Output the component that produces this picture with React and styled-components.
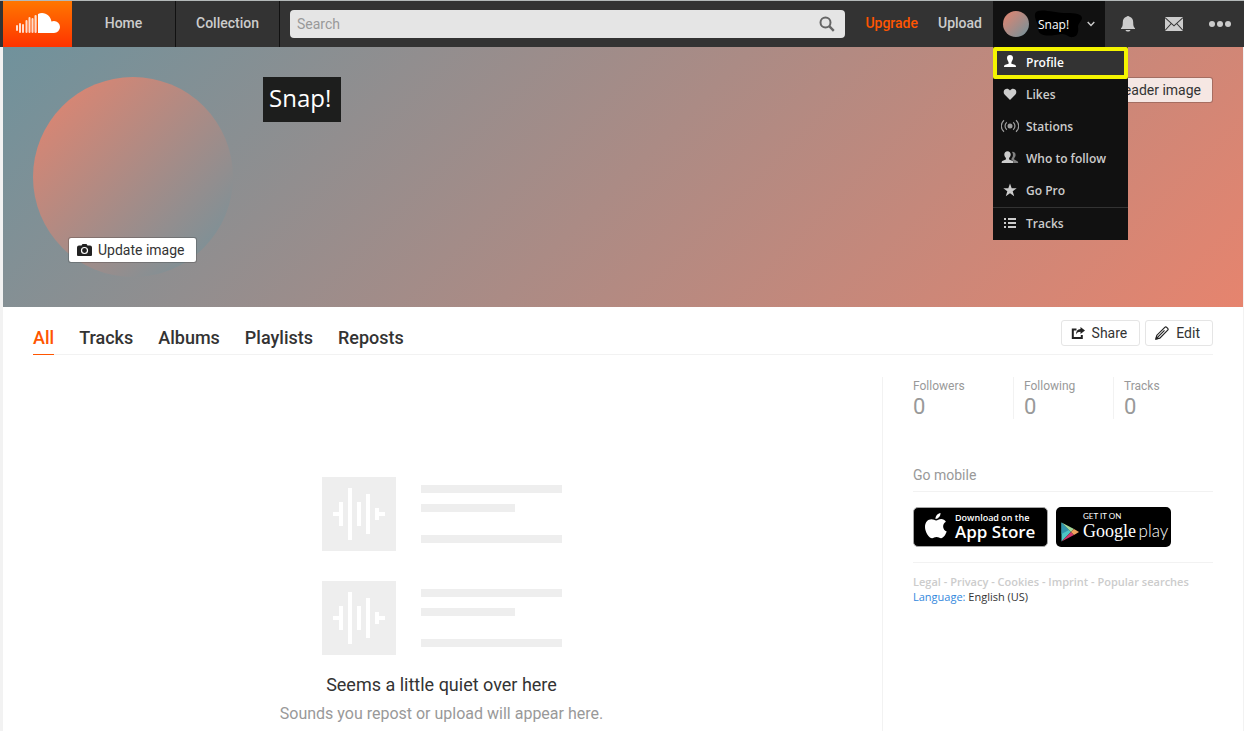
import React, { useState } from 'react'
import styled, { createGlobalStyle } from 'styled-components'

const sans = `Roboto, "Liberation Sans", sans-serif`
const humanist = `"Open Sans", "Noto Sans", sans-serif`

const menuItems = [
    { label: 'Profile', icon: 'person', active: true },
    { label: 'Likes', icon: 'heart' },
    { label: 'Stations', icon: 'station' },
    { label: 'Who to follow', icon: 'people' },
    { label: 'Go Pro', icon: 'star' },
    { label: 'Tracks', icon: 'list', divided: true }
]

const tabs = ['All', 'Tracks', 'Albums', 'Playlists', 'Reposts']
const stats = ['Followers', 'Following', 'Tracks']
const legal = ['Legal', 'Privacy', 'Cookies', 'Imprint', 'Popular searches']

const icons = {
    person: <path d="M9 2c1.900 0 3 1.200 3 3.100 0 1.700-1.100 3-1.600 4.400v1.300l3.300 1c.8.300 1.300.9 1.300 2.200H3c0-1.300.5-1.900 1.300-2.200l3.300-1V9.500C7.100 8.100 6 6.800 6 5.100 6 3.200 7.100 2 9 2z" />,
    heart: <path d="M9 15L3.800 9.800C2.200 8.100 2.400 5.700 3.800 4.500 5.400 3.100 7.700 3.500 9 5.400c1.300-1.900 3.600-2.300 5.200-.9 1.400 1.200 1.600 3.600 0 5.300z" />,
    station: <>
        <circle cx="9" cy="9" r="2.500" opacity=".75" />
        <path d="M5.800 5.200a5 5 0 0 0 0 7.600M12.200 5.200a5 5 0 0 1 0 7.600M3 3.200C-.6 6.400-.6 11.600 3 14.800M15 3.200c3.600 3.200 3.600 8.400 0 11.600" fill="none" stroke="currentColor" strokeWidth="1.200" opacity=".75" />
    </>,
    people: <>
        <path d="M11.500 2.800c2 0 3.100 1.300 3.100 3.100 0 1.300-.7 2.300-1.400 3.300v1.400l2.800 1.300c.8.400 1.200 1 1.200 2.100h-4.400c0-1.700-.8-2.500-2.300-3.100V9.400c.8-1 1.500-2.100 1.500-3.500 0-1.200-.4-2.200-1-2.900z" opacity=".6" />
        <path d="M6.500 2.200c2 0 3.200 1.400 3.200 3.300 0 1.500-.8 2.600-1.600 3.600v1.500l3.100 1.200c.8.400 1.300 1.100 1.300 2.200H.6c0-1.100.4-1.800 1.200-2.200l3.100-1.200V9.100c-.8-1-1.600-2.100-1.600-3.600 0-1.900 1.200-3.300 3.200-3.300z" />
    </>,
    star: <path d="M9 2.500l1.700 4.700 5 .1-4 3 1.500 4.900L9 12.300l-4.200 2.900 1.500-4.900-4-3 5-.1z" />,
    list: <path d="M3 4h2v2H3zm4 0h8v2H7zM3 8h2v2H3zm4 0h8v2H7zM3 12h2v2H3zm4 0h8v2H7z" />
}

const CloudLogo = () => (
    <svg width="44" height="20" viewBox="0 0 44 20" fill="#fff" aria-hidden="true">
        <path d="M22 .9C23.300.3 24.700 0 26 0c4.900 0 8.900 3.700 9.400 8.500.8-.3 1.600-.5 2.500-.5A6 6 0 0 1 44 14a6 6 0 0 1-6 6H22z" />
        <g opacity=".8">
            <rect x="0" y="12" width="2" height="6" rx="1" />
            <rect x="3" y="10" width="2" height="10" rx="1" />
            <rect x="6" y="11" width="2" height="9" rx="1" />
            <rect x="9.500" y="7" width="2" height="13" rx="1" />
            <rect x="12.500" y="4" width="2" height="16" rx="1" />
            <rect x="15.500" y="5" width="2" height="15" rx="1" />
            <rect x="18.500" y="2" width="2.200" height="18" rx="1" />
        </g>
    </svg>
)

const CameraIcon = () => (
    <svg width="15" height="12" viewBox="0 0 15 12" aria-hidden="true">
        <path d="M4.500 1.500L5.500 0h4l1 1.500H13a2 2 0 0 1 2 2V11a1 1 0 0 1-1 1H1a1 1 0 0 1-1-1V3.500a2 2 0 0 1 2-2z" fill="#222" />
        <circle cx="7.500" cy="6.500" r="3" fill="none" stroke="#fff" strokeWidth="1.200" />
    </svg>
)

const WaveArt = () => (
    <svg width="74" height="74" viewBox="0 0 74 74" aria-hidden="true">
        <path fill="#eee" d="M0 0h74v74H0z" />
        <path fill="#fff" d="M11 35h6V25h4v24h-4V39h-6zM26 11h4v52h-4zM35 25h4v24h-4zM44 17h4v40h-4zM53 31h4v4h6v4h-6v4h-4z" />
    </svg>
)

const App = () => {

    const [open, setOpen] = useState(true)
    const [tab, setTab] = useState('All')
    const [query, setQuery] = useState('')

    return (
        <>
            <GlobalStyle />
            <TopBar>
                <Logo href="#home" aria-label="SoundCloud"><CloudLogo /></Logo>
                <MainNav>
                    <a href="#home">Home</a>
                    <a href="#collection">Collection</a>
                </MainNav>
                <SearchBox>
                    <input type="search" aria-label="Search" placeholder="Search" value={query} onChange={e => setQuery(e.target.value)} />
                    <button type="button" aria-label="Submit search">
                        <svg width="16" height="16" viewBox="0 0 16 16" fill="none" stroke="#666" strokeWidth="2" aria-hidden="true">
                            <circle cx="6.500" cy="6.500" r="5" />
                            <path d="M10.200 10.200l4.600 4.600" strokeWidth="2.400" />
                        </svg>
                    </button>
                </SearchBox>
                <TextLinks>
                    <TextLink href="#upgrade" $hot>Upgrade</TextLink>
                    <TextLink href="#upload">Upload</TextLink>
                </TextLinks>
                <UserArea>
                    <UserButton type="button" aria-expanded={open} onClick={() => setOpen(!open)}>
                        <Avatar $size={26} />
                        <UserName>
                            <svg width="50" height="28" viewBox="0 0 50 28" aria-hidden="true">
                                <path d="M5 1C11-1 23 3 34 3c8 0 15 1 15 5 0 3-4 5-4 9 1 5-1 10-5 10-4 1-6-3-11-3-8 1-15 3-21 0-4-2-2-7-4-11C2 8 0 3 5 1z" fill="#000" />
                            </svg>
                            <span>Snap!</span>
                        </UserName>
                        <svg width="8" height="6" viewBox="0 0 8 6" fill="none" stroke="#ccc" strokeWidth="1.400" aria-hidden="true"><path d="M.7 1L4 4.500 7.300 1" /></svg>
                    </UserButton>
                    {open && <Menu>
                        {menuItems.map(item => (
                            <MenuItem key={item.label} $divided={item.divided}>
                                <MenuLink href="#menu" $active={item.active}>
                                    <svg width="18" height="18" viewBox="0 0 18 18" fill="currentColor" aria-hidden="true">{icons[item.icon]}</svg>
                                    {item.label}
                                </MenuLink>
                            </MenuItem>
                        ))}
                    </Menu>}
                </UserArea>
                <IconButton type="button" aria-label="Notifications">
                    <svg width="16" height="16" viewBox="0 0 16 16" fill="#ccc" aria-hidden="true">
                        <path d="M8 0c.8 0 1.300.3 1.500.8C12 1.500 13.200 3.600 13.200 6.300c0 3.200.3 4.800 1.800 5.900V13H1v-.8c1.500-1.100 1.800-2.700 1.800-5.900C2.800 3.600 4 1.500 6.500.8 6.700.3 7.200 0 8 0zM5.500 14h5c-.4 1.100-1.300 1.600-2.500 1.600S5.900 15.100 5.500 14z" />
                    </svg>
                </IconButton>
                <IconButton type="button" aria-label="Messages">
                    <svg width="18" height="14" viewBox="0 0 18 14" aria-hidden="true">
                        <path d="M0 0h18v14H0z" fill="#ccc" />
                        <path d="M0 .6l9 8.200 9-8.200M0 13.500l6.300-7M18 13.500l-6.300-7" fill="none" stroke="#333" strokeWidth="1.100" />
                    </svg>
                </IconButton>
                <IconButton type="button" aria-label="More">
                    <svg width="22" height="6" viewBox="0 0 22 6" fill="#ccc" aria-hidden="true"><circle cx="3" cy="3" r="3" /><circle cx="11" cy="3" r="3" /><circle cx="19" cy="3" r="3" /></svg>
                </IconButton>
            </TopBar>
            <Page>
                <Hero>
                    <AvatarHolder>
                        <Avatar $size={200} />
                        <UpdateImage type="button"><CameraIcon />Update image</UpdateImage>
                    </AvatarHolder>
                    <ProfileName>Snap!</ProfileName>
                    <HeaderImage type="button"><CameraIcon />Update header image</HeaderImage>
                </Hero>
                <TabBar>
                    <Tabs>
                        {tabs.map(name => (
                            <Tab key={name} type="button" $active={tab === name} onClick={() => setTab(name)}>{name}</Tab>
                        ))}
                    </Tabs>
                    <Actions>
                        <ActionButton type="button">
                            <svg width="14" height="13" viewBox="0 0 14 13" aria-hidden="true">
                                <path d="M5.500 2.500H1.800V11h9V8" fill="none" stroke="#222" strokeWidth="2" />
                                <path d="M9.500 0L14 3.600 9.500 7V4.800C7.400 4.800 6 5.500 5 7.500c0-3.500 1.500-5.300 4.500-5.600z" fill="#222" />
                            </svg>
                            Share
                        </ActionButton>
                        <ActionButton type="button">
                            <svg width="14" height="14" viewBox="0 0 14 14" fill="none" stroke="#222" strokeWidth="1.200" aria-hidden="true">
                                <path d="M1 13l.9-3.800L9.800 1.300c.6-.6 1.300-.6 1.900 0l1 1c.6.600.6 1.300 0 1.900L4.800 12.100zM3 10.800l6.500-6.500" />
                                <path d="M1 13l.5-2.300 1.800 1.800z" fill="#222" />
                            </svg>
                            Edit
                        </ActionButton>
                    </Actions>
                </TabBar>
                <Columns>
                    <Empty>
                        <Placeholders>
                            {[1, 2].map(n => (
                                <Placeholder key={n}>
                                    <WaveArt />
                                    <Lines><i /><i /><i /></Lines>
                                </Placeholder>
                            ))}
                        </Placeholders>
                        <h2>Seems a little quiet over here</h2>
                        <p>Sounds you repost or upload will appear here.</p>
                    </Empty>
                    <Sidebar>
                        <Stats>
                            {stats.map(name => (
                                <Stat key={name}>
                                    <dt>{name}</dt>
                                    <dd>0</dd>
                                </Stat>
                            ))}
                        </Stats>
                        <MobileTitle>Go mobile</MobileTitle>
                        <Badges>
                            <AppleBadge href="#ios">
                                <svg width="22" height="26" viewBox="0 0 22 26" fill="#fff" aria-hidden="true">
                                    <path d="M15.500 0c.2 2.900-2.200 5.900-5 5.900C10.200 3.200 12.800.3 15.500 0zM11.200 7.500c1.200 0 2.700-1.400 5-1.400 1.900 0 3.700 1 4.700 2.600-4.100 2.400-3.400 8.100.8 9.800-1 2.900-3.300 6.700-5.600 6.700-1.800 0-2.300-1.100-4.500-1.100s-2.900 1.100-4.500 1.100C3.900 25.200 0 19 0 14c0-5 3.200-7.700 6.300-7.700 2.100 0 3.700 1.200 4.900 1.200z" />
                                </svg>
                                <div><small>Download on the</small><strong>App Store</strong></div>
                            </AppleBadge>
                            <GoogleBadge href="#android">
                                <svg width="18" height="20" viewBox="0 0 18 20" aria-hidden="true">
                                    <path d="M.5.500v19L10 10z" fill="#4cc5c5" />
                                    <path d="M.5.500L10 10l3-3z" fill="#a5d89a" />
                                    <path d="M.5 19.500L10 10l3 3z" fill="#d0386b" />
                                    <path d="M13 7l5 3-5 3-3-3z" fill="#f0a35e" />
                                    <path d="M.5.500L8 8 .5 12z" fill="#3195ae" />
                                </svg>
                                <div><small>GET IT ON</small><strong>Google <em>play</em></strong></div>
                            </GoogleBadge>
                        </Badges>
                        <Footer>
                            <Legal>
                                {legal.map((name, i) => (
                                    <React.Fragment key={name}>{i > 0 && ' - '}<a href="#legal">{name}</a></React.Fragment>
                                ))}
                            </Legal>
                            <Language href="#language">Language: <span>English (US)</span></Language>
                        </Footer>
                    </Sidebar>
                </Columns>
            </Page>
        </>
    )
}

const GlobalStyle = createGlobalStyle`
    * {
        box-sizing: border-box;
    }

    body {
        margin: 0;
        background: #f2f2f2;
        color: #333;
        font-family: ${sans};
    }

    #root {
        min-height: 100vh;
        display: flex;
        flex-direction: column;
    }

    button, input {
        font-family: inherit;
    }

    a {
        text-decoration: none;
    }

    svg {
        flex: none;
    }
`

const TopBar = styled.header`
    display: flex;
    height: 47px;
    padding: 0 1px 0 3px;
    border-top: 1px solid #b4b9b9;
    background: #333;
`

const Logo = styled.a`
    width: 69px;
    display: flex;
    align-items: center;
    justify-content: center;
    padding-bottom: 2px;
    background: linear-gradient(#f70, #f30);
`

const MainNav = styled.nav`
    display: flex;

    & > a {
        width: 104px;
        border-right: 1px solid #111;
        text-align: center;
        font-size: 14px;
        line-height: 44px;
        color: #ccc;
        font-weight: 500;
    }
`

const SearchBox = styled.div`
    flex: 1;
    min-width: 120px;
    display: flex;
    height: 28px;
    margin: 9px 20px 0 10px;
    border-radius: 4px;
    background: #e5e5e5;

    & > input {
        flex: 1;
        min-width: 0;
        border: none;
        outline: none;
        background: none;
        padding: 0 7px;
        font-size: 14px;
        color: #333;
    }

    & > input::placeholder {
        color: #999;
    }

    & > button {
        width: 36px;
        padding: 0;
        border: none;
        background: none;
        cursor: pointer;
        display: flex;
        align-items: center;
        justify-content: center;
    }
`

const TextLinks = styled.div`
    display: flex;
    gap: 20px;
    padding-right: 11px;
`

const TextLink = styled.a`
    font-size: 14px;
    font-weight: 500;
    line-height: 44px;
    color: ${props => props.$hot ? '#f50' : '#ccc'};
`

const UserArea = styled.div`
    position: relative;
`

const UserButton = styled.button`
    display: flex;
    align-items: center;
    width: 112px;
    height: 46px;
    padding: 0 10px;
    border: none;
    background: #111;
    cursor: pointer;

    & > svg {
        margin-left: auto;
    }
`

const Avatar = styled.div`
    width: ${props => props.$size}px;
    height: ${props => props.$size}px;
    flex: none;
    border-radius: 50%;
    background: linear-gradient(135deg, #e6846e, #70929c);
`

/* ink blot with the name written over it */
const UserName = styled.span`
    display: grid;
    align-items: center;
    margin-left: 4px;

    & > * {
        grid-area: 1 / 1;
    }

    & > span {
        padding-left: 5px;
        text-align: left;
        font-family: ${humanist};
        font-size: 12px;
        color: #fff;
    }
`

const Menu = styled.ul`
    position: absolute;
    top: 46px;
    left: 0;
    z-index: 2;
    width: 135px;
    margin: 0;
    padding: 0;
    list-style: none;
    background: #111;
`

const MenuItem = styled.li`
    border-top: ${props => props.$divided ? '1px solid #333' : 'none'};
`

const MenuLink = styled.a`
    display: flex;
    align-items: center;
    gap: 7px;
    height: 32px;
    padding: 0 8px 2px;
    font-family: ${humanist};
    font-size: 12px;
    font-weight: 600;
    white-space: nowrap;
    color: ${props => props.$active ? '#fff' : '#ccc'};
    background: ${props => props.$active ? '#333' : 'none'};
    outline: ${props => props.$active ? '4px solid #f5f500' : 'none'};
    outline-offset: -4px;
    border-radius: 2px;
`

const IconButton = styled.button`
    width: 46px;
    padding: 0;
    border: none;
    background: none;
    cursor: pointer;
    display: flex;
    align-items: center;
    justify-content: center;
`

const Page = styled.main`
    flex: 1;
    display: flex;
    flex-direction: column;
    margin: 0 1px 0 3px;
    background: #fff;
`

const Hero = styled.section`
    display: flex;
    align-items: flex-start;
    gap: 30px;
    height: 260px;
    padding: 30px;
    background: linear-gradient(135deg, #70929c, #e6846e);
`

const AvatarHolder = styled.div`
    position: relative;
`

const ImageButton = styled.button`
    display: flex;
    align-items: center;
    gap: 6px;
    height: 26px;
    padding: 0 11px 0 8px;
    border: 1px solid rgba(34,34,34,0.25);
    border-radius: 3px;
    background: #fff;
    background-clip: padding-box;
    font-size: 14px;
    white-space: nowrap;
    color: #333;
    cursor: pointer;
`

const UpdateImage = styled(ImageButton)`
    position: absolute;
    left: 35px;
    bottom: 14px;
`

const HeaderImage = styled(ImageButton)`
    margin-left: auto;
    background-color: rgba(255,255,255,0.8);
`

const ProfileName = styled.h1`
    height: 45px;
    margin: 0;
    padding: 0 10px 0 6px;
    font-family: ${humanist};
    font-size: 24px;
    font-weight: 400;
    line-height: 42px;
    color: #fff;
    background: #1d1e1d;
`

const TabBar = styled.div`
    display: flex;
    justify-content: space-between;
    margin: 0 30px;
    border-bottom: 1px solid #f2f2f2;
`

const Tabs = styled.div`
    display: flex;
    gap: 25px;
    margin-bottom: -1px;
`

const Tab = styled.button`
    height: 48px;
    padding: 14px 0 0;
    border: none;
    border-bottom: 1px solid ${props => props.$active ? '#f50' : 'transparent'};
    background: none;
    font-size: 18px;
    font-weight: 500;
    color: ${props => props.$active ? '#f50' : '#333'};
    cursor: pointer;
`

const Actions = styled.div`
    display: flex;
    gap: 5px;
    padding-top: 13px;
`

const ActionButton = styled.button`
    display: flex;
    align-items: center;
    gap: 7px;
    height: 26px;
    padding: 0 12px 0 9px;
    border: 1px solid #e5e5e5;
    border-radius: 3px;
    background: #fff;
    font-size: 14px;
    color: #333;
    cursor: pointer;
`

const Columns = styled.div`
    flex: 1;
    display: flex;
    padding: 22px 30px 0;
`

const Empty = styled.section`
    flex: 1;
    display: flex;
    flex-direction: column;
    align-items: center;
    padding: 100px 32px 0 0;

    & > h2 {
        margin: 18px 0 5px;
        font-size: 18px;
        font-weight: 400;
        line-height: 24px;
        color: #333;
    }

    & > p {
        margin: 0;
        font-size: 16px;
        line-height: 24px;
        color: #999;
    }
`

const Placeholders = styled.div`
    display: grid;
    gap: 30px;
`

const Placeholder = styled.div`
    display: flex;
    gap: 25px;
`

const Lines = styled.div`
    width: 141px;
    padding-top: 8px;

    & > i {
        display: block;
        height: 8px;
        background: #eee;
    }

    & > i:nth-child(2) {
        width: 94px;
        margin: 11px 0 23px;
    }
`

const Sidebar = styled.aside`
    width: 331px;
    flex: none;
    padding-left: 30px;
    border-left: 1px solid #f2f2f2;
`

const Stats = styled.dl`
    display: flex;
    margin: 0;
    color: #999;
`

const Stat = styled.div`
    width: 100px;
    height: 42px;

    & + & {
        padding-left: 10px;
        border-left: 1px solid #f2f2f2;
    }

    & > dt {
        font-size: 12px;
        line-height: 18px;
    }

    & > dd {
        margin: 0;
        font-size: 22px;
        line-height: 24px;
    }
`

const MobileTitle = styled.h3`
    margin: 45px 0 15px;
    padding-bottom: 5px;
    border-bottom: 1px solid #f2f2f2;
    font-size: 14px;
    font-weight: 400;
    line-height: 22px;
    color: #999;
`

const Badges = styled.div`
    display: flex;
    gap: 8px;
`

const Badge = styled.a`
    display: flex;
    height: 40px;
    border-radius: 5px;
    background: #000;
    color: #fff;
    white-space: nowrap;

    & small, & strong {
        display: block;
    }
`

const AppleBadge = styled(Badge)`
    width: 135px;
    gap: 8px;
    padding: 5px 0 0 11px;
    border: 1px solid #a6a6a6;

    & small {
        font-family: ${humanist};
        font-size: 9px;
        font-weight: 600;
        line-height: 9px;
    }

    & strong {
        font-family: ${humanist};
        font-size: 17px;
        font-weight: 600;
        line-height: 20px;
    }
`

const GoogleBadge = styled(Badge)`
    width: 115px;
    gap: 4px;
    padding: 4px 0 0 5px;

    & > svg {
        margin-top: 11px;
    }

    & small {
        font-family: Lato, sans-serif;
        font-size: 8px;
        line-height: 10px;
    }

    & strong {
        font-family: "Liberation Serif", serif;
        font-size: 18px;
        font-weight: 400;
        line-height: 20px;
    }

    & em {
        margin-left: -2px;
        font-family: Lato, sans-serif;
        font-size: 17px;
        font-style: normal;
        font-weight: 300;
    }
`

const Footer = styled.footer`
    margin-top: 15px;
    padding-top: 11px;
    border-top: 1px solid #f2f2f2;
    font-family: ${humanist};
    font-size: 11px;
    line-height: 15px;
`

const Legal = styled.div`
    font-weight: 600;
    color: #ccc;

    & > a {
        color: inherit;
    }
`

const Language = styled.a`
    display: block;
    color: #38d;

    & > span {
        color: #333;
    }
`

export default App
